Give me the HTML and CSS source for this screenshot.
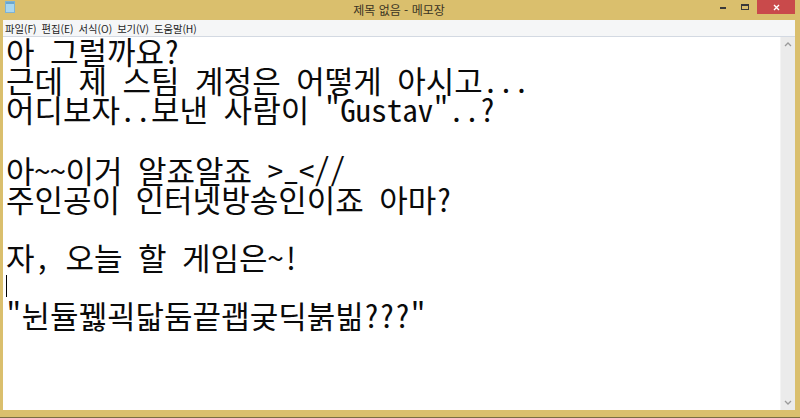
FILE: index.html
```html
<!DOCTYPE html>
<html lang="ko">
<head>
<meta charset="utf-8">
<title>제목 없음 - 메모장</title>
<link rel="stylesheet" href="styles.css">
</head>
<body>
<div class="window">
  <div class="titlebar">
    <div class="title-left">
      <svg class="app-icon" width="10" height="12" viewBox="0 0 10 12">
        <rect x="0.5" y="0.5" width="9" height="11" fill="#a9d6ee" stroke="#7fb3d3"/>
        <rect x="1" y="1" width="8" height="2" fill="#6aa7cf"/>
      </svg>
    </div>
    <div class="title">제목 없음 - 메모장</div>
    <div class="controls">
      <span class="btn min"><svg width="6" height="2" viewBox="0 0 6 2"><rect width="6" height="2" fill="#3a3a3a"/></svg></span>
      <span class="btn max"><svg width="8" height="6" viewBox="0 0 8 6"><rect x="0.5" y="0.5" width="7" height="5" fill="none" stroke="#3a3a3a"/><rect x="0.5" y="0.5" width="7" height="1.5" fill="#3a3a3a"/></svg></span>
      <span class="btn close"><svg width="7" height="7" viewBox="0 0 7 7"><path d="M1 1L6 6M6 1L1 6" stroke="#fff" stroke-width="1.4"/></svg></span>
    </div>
  </div>
  <div class="menubar">
    <span class="menu">파일(F)</span>
    <span class="menu">편집(E)</span>
    <span class="menu">서식(O)</span>
    <span class="menu">보기(V)</span>
    <span class="menu">도움말(H)</span>
  </div>
  <div class="client">
    <div class="editor"><pre class="text">아 그럴까요?
근데 제 스팀 계정은 어떻게 아시고...
어디보자..보낸 사람이 "Gustav"..?

아~~이거 알죠알죠 &gt;<span class="low">_</span>&lt;//
주인공이 인터넷방송인이죠 아마?

자, 오늘 할 게임은~!
<span class="caret"></span>
"뉜듈꿿괵닯둠끝괩궂딕붉빎???"</pre></div>
    <div class="vscroll">
      <svg class="arrow" width="8" height="5" viewBox="0 0 8 5"><path d="M1 4L4 1L7 4" fill="none" stroke="#9a9a9a" stroke-width="1.3"/></svg>
      <svg class="arrow" width="8" height="5" viewBox="0 0 8 5"><path d="M1 1L4 4L7 1" fill="none" stroke="#9a9a9a" stroke-width="1.3"/></svg>
    </div>
  </div>
</div>
</body>
</html>
```

FILE: styles.css
```css
html, body {
  margin: 0;
  padding: 0;
  width: 800px;
  height: 418px;
  overflow: hidden;
}

.window {
  box-sizing: border-box;
  width: 800px;
  height: 418px;
  background: #dabf6d;
  padding: 0 5px 7px 3px;
  border-bottom: 1px solid #7a6c42;
  display: flex;
  flex-direction: column;
}

/* title bar */
.titlebar {
  height: 20px;
  display: grid;
  grid-template-columns: 1fr auto 1fr;
  align-items: start;
  font-family: "Noto Sans CJK KR", "Noto Sans", sans-serif;
}

.title-left {
  padding: 1px 0 0 2px;
}

.app-icon {
  display: block;
}

.title {
  font-size: 12px;
  line-height: 19px;
  color: #3a3424;
}

.controls {
  display: flex;
  justify-content: flex-end;
  align-items: flex-start;
}

.btn {
  height: 14px;
  display: flex;
  align-items: center;
  justify-content: center;
}

.btn.min {
  width: 22px;
  align-items: flex-end;
  height: 9px;
}

.btn.max {
  width: 22px;
  margin-right: 1px;
}

.btn.close {
  width: 38px;
  background: #c94a4b;
}

/* menu bar */
.menubar {
  height: 16px;
  background: #f5f6f7;
  border-bottom: 1px solid #d3d9e2;
  display: flex;
  align-items: center;
  gap: 5px;
  padding-left: 2px;
  font-family: "Noto Sans CJK KR", "Noto Sans", sans-serif;
  font-size: 10.3px;
  color: #1e1e1e;
}

/* edit area + scroll bar */
.client {
  flex: 1;
  display: flex;
  min-height: 0;
  background: #fff;
}

.editor {
  flex: 1;
  overflow: hidden;
}

/* fixed-pitch text: hangul takes two cells, latin one */
.text {
  margin: -1px 0 0;
  padding: 0 0 0 3px;
  font-family: "Noto Sans Mono CJK KR", "Noto Sans Mono CJK SC", "DejaVu Sans Mono", monospace;
  font-size: 31px;
  line-height: 29px;
  color: #0a0a0a;
  white-space: pre;
}

.low {
  vertical-align: 3px;
}

.caret {
  display: inline-block;
  width: 1px;
  height: 22px;
  background: #000;
  vertical-align: 2px;
}

.vscroll {
  width: 14px;
  background: #ebebeb;
  border-left: 1px solid #f3f3f3;
  display: flex;
  flex-direction: column;
  justify-content: space-between;
  align-items: center;
  padding: 5px 0 5px;
}

.arrow {
  display: block;
}
```
